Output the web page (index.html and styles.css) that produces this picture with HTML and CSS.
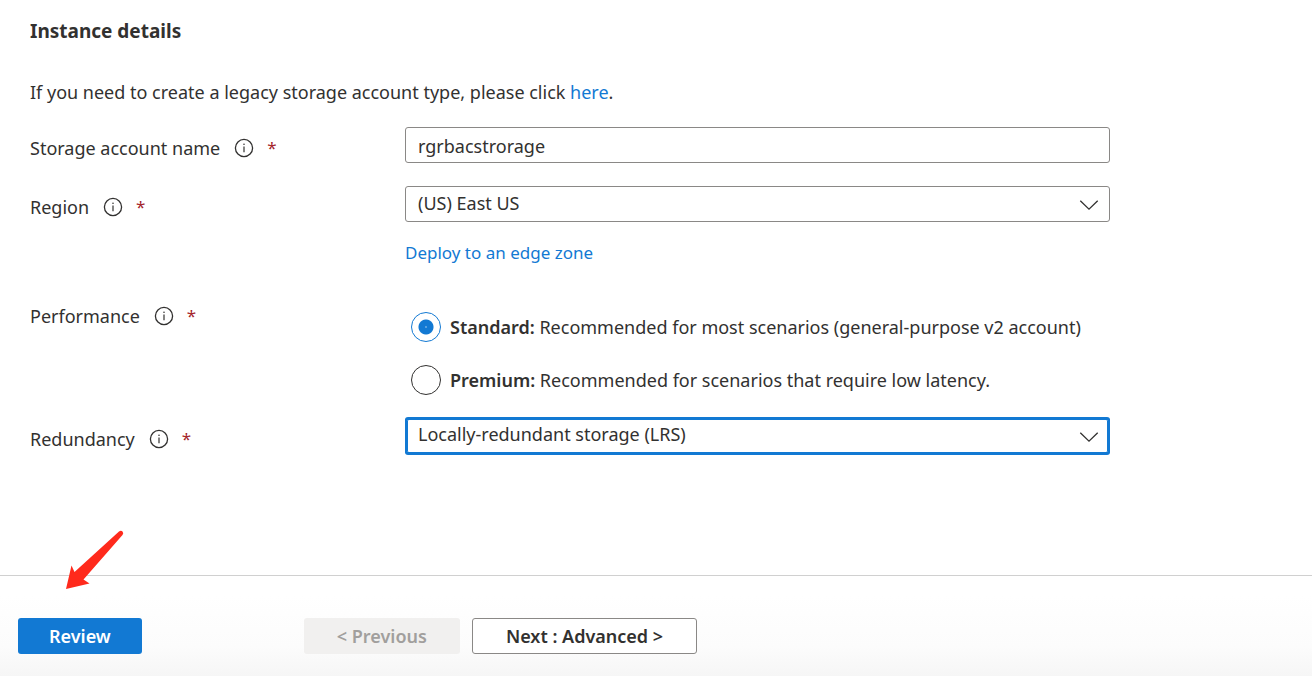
FILE: index.html
```html
<!DOCTYPE html>
<html lang="en">
<head>
<meta charset="utf-8">
<meta name="viewport" content="width=device-width, initial-scale=1">
<title>Create a storage account</title>
<link rel="stylesheet" href="styles.css">
</head>
<body>
<svg class="sprite" aria-hidden="true">
  <symbol id="info" viewBox="0 0 20 20">
    <circle cx="10" cy="10" r="8.6" fill="none" stroke="currentColor" stroke-width="1.3"/>
    <path d="M10 8.4V14.2" stroke="currentColor" stroke-width="1.2"/>
    <circle cx="10" cy="6.2" r="0.8" fill="currentColor"/>
  </symbol>
  <symbol id="chevron" viewBox="0 0 20 12">
    <path d="M1.3 1.7L10 10.2L18.7 1.7" fill="none" stroke="currentColor" stroke-width="1.3"/>
  </symbol>
</svg>
<form class="page">
  <main class="content">
    <h2 class="title">Instance details</h2>
    <p class="intro">If you need to create a legacy storage account type, please click <a class="link" href="#">here</a>.</p>

    <div class="rows">
      <div class="row">
        <div class="caption">
          <label for="name">Storage account name</label>
          <svg class="info"><use href="#info"/></svg>
          <span class="required">*</span>
        </div>
        <div class="field">
          <input class="control" id="name" type="text" value="rgrbacstrorage">
        </div>
      </div>

      <div class="row">
        <div class="caption">
          <label for="region">Region</label>
          <svg class="info"><use href="#info"/></svg>
          <span class="required">*</span>
        </div>
        <div class="field">
          <div class="picker">
            <select class="control select" id="region"><option>(US) East US</option></select>
            <svg class="chevron"><use href="#chevron"/></svg>
          </div>
          <a class="link edge-link" href="#">Deploy to an edge zone</a>
        </div>
      </div>

      <div class="row row-options" role="radiogroup" aria-labelledby="performance">
        <div class="caption">
          <span id="performance">Performance</span>
          <svg class="info"><use href="#info"/></svg>
          <span class="required">*</span>
        </div>
        <div class="field options">
          <label class="option"><input class="radio" type="radio" name="performance" checked><span><b class="strong">Standard:</b> Recommended for most scenarios (general-purpose v2 account)</span></label>
          <label class="option"><input class="radio" type="radio" name="performance"><span><b class="strong">Premium:</b> Recommended for scenarios that require low latency.</span></label>
        </div>
      </div>

      <div class="row">
        <div class="caption">
          <label for="redundancy">Redundancy</label>
          <svg class="info"><use href="#info"/></svg>
          <span class="required">*</span>
        </div>
        <div class="field">
          <div class="picker">
            <select class="control select active" id="redundancy"><option>Locally-redundant storage (LRS)</option></select>
            <svg class="chevron"><use href="#chevron"/></svg>
          </div>
        </div>
      </div>
    </div>
  </main>

  <footer class="footer">
    <svg class="arrow" viewBox="0 0 60 60" aria-hidden="true">
      <path d="M1 59L6.500 35.500L9.500 42L54 1.500Q56 0 57.500 1.500Q59 3 57.500 5L18.500 49.500L24.500 53.500Z" fill="#ff2a1c"/>
    </svg>
    <button class="button primary" type="submit">Review</button>
    <div class="pager">
      <button class="button" type="button" disabled>&lt; Previous</button>
      <button class="button next" type="button">Next : Advanced &gt;</button>
    </div>
  </footer>
</form>
</body>
</html>
```

FILE: styles.css
```css
* {
  box-sizing: border-box;
}

body {
  margin: 0;
  background: #fff;
  color: #323130;
  font: 18px/24px "Noto Sans", "Open Sans", sans-serif;
}

.sprite {
  position: absolute;
  width: 0;
  height: 0;
}

.page {
  display: flex;
  flex-direction: column;
  min-height: 100vh;
}

.content {
  padding: 19px 30px 24px;
}

.title {
  margin: 0 0 37px;
  font-size: 19px;
  line-height: 24px;
  font-weight: 700;
}

.intro {
  margin: 0 0 23px;
}

.link {
  color: #1279d3;
  text-decoration: none;
}

.rows {
  display: grid;
  gap: 23px;
}

.row {
  display: grid;
  grid-template-columns: 375px minmax(0, 705px);
}

.caption {
  display: flex;
  align-items: center;
  height: 24px;
  margin-top: 9px;
}

.info {
  width: 20px;
  height: 20px;
  margin: 0 13px 0 14px;
}

.required {
  color: #a4262c;
  font-size: 17px;
}

.control {
  display: block;
  width: 100%;
  height: 36px;
  padding: 2px 12px 0;
  border: 1px solid #8a8886;
  border-radius: 3px;
  background: #fff;
  color: #323130;
  font: inherit;
  outline: none;
}

.select {
  appearance: none;
  padding: 0 12px 2px;
}

.active {
  border: 2px solid #1279d3;
  padding: 0 11px 4px;
  box-shadow: 0 1px 0 #1279d3, 0 -1px 0 #1279d3, inset 1px 0 0 #1279d3, inset -1px 0 0 #1279d3;
}

.picker {
  position: relative;
}

.chevron {
  position: absolute;
  top: 13px;
  right: 11px;
  width: 20px;
  height: 12px;
  pointer-events: none;
}

.edge-link {
  display: block;
  width: fit-content;
  margin-top: 19px;
  font-size: 17px;
}

.row-options .caption {
  margin-top: 16px;
}

.options {
  display: grid;
  gap: 23px;
  padding: 24px 0 0 6px;
}

.option {
  display: flex;
  align-items: center;
  gap: 9px;
}

.radio {
  appearance: none;
  flex: none;
  width: 30px;
  height: 30px;
  margin: 0;
  border: 1px solid #323130;
  border-radius: 50%;
  background: #fff;
}

.radio:checked {
  border-color: #1279d3;
  background: radial-gradient(circle, #fff 0, #1279d3 1px 7px, #fff 8px);
}

.strong,
.button {
  font-weight: 600;
}

.footer {
  position: relative;
  display: flex;
  gap: 162px;
  margin-top: auto;
  padding: 42px 18px 22px;
  border-top: 1px solid #d0d0d0;
  background: linear-gradient(#fff 20%, #fcfcfc 70%, #f6f6f6);
}

.arrow {
  position: absolute;
  top: -46px;
  left: 65px;
  width: 60px;
  height: 60px;
}

.pager {
  display: flex;
  gap: 12px;
}

.button {
  height: 36px;
  padding: 0 33px;
  border: 0;
  border-radius: 3px;
  font-family: inherit;
  font-size: 18px;
  line-height: 24px;
  white-space: nowrap;
}

.button:disabled {
  background: #f1f0ef;
  color: #a19f9d;
}

.primary {
  padding: 0 31px;
  background: #1279d3;
  color: #fff;
}

.next {
  border: 1px solid #8a8886;
  background: #fff;
  color: #323130;
}
```
